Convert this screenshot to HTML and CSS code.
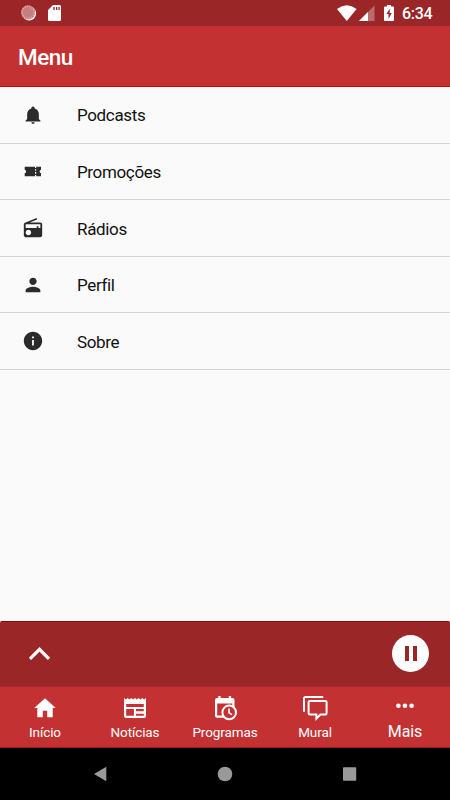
FILE: index.html
```html
<!DOCTYPE html>
<html lang="pt">
<head>
<meta charset="utf-8">
<title>Menu</title>
<link rel="stylesheet" href="styles.css">
</head>
<body>
<div class="app">
  <div class="status">
    <svg class="sync" width="17" height="17" viewBox="0 0 17 17"><circle cx="8.100" cy="8.500" r="7" fill="#fff"/><circle cx="7.100" cy="7.400" r="7.100" fill="#c77e80"/><circle cx="7.100" cy="7.400" r="6" fill="none" stroke="#dba9aa" stroke-width="1.600" stroke-dasharray="1.200 1.200"/></svg>
    <svg class="sd" width="14" height="17" viewBox="0 0 14 17"><path fill="#fff" fill-rule="evenodd" d="M5 0H11.500Q13 0 13 1.500V14.500Q13 16 11.500 16H1.500Q0 16 0 14.500V5ZM5.300 2V5H6.700V2ZM8 2V5H9.300V2ZM10.400 2V5H11.700V2Z"/></svg>
    <span class="spacer"></span>
    <svg class="wifi" width="20" height="17" viewBox="0 0 20 17"><path fill="#fff" d="M0 4Q9.800-3.400 19.600 4L9.800 16Z"/></svg>
    <svg class="signal" width="16" height="16" viewBox="0 0 16 16"><path fill="#b96b6d" d="M0 16L15.500 .5V16Z"/><path fill="#fff" d="M0 16L9 7V16Z"/></svg>
    <svg class="battery" width="11" height="17" viewBox="0 0 11 17"><path fill="#fff" d="M3 0H7V1.500H9Q10 1.500 10 2.500V15Q10 16 9 16H1Q0 16 0 15V2.500Q0 1.500 1 1.500H3Z"/><path fill="#9b2628" d="M5.700 3.600L2.500 9H4.500V14L7.700 8H5.700Z"/></svg>
    <span class="time">6:34</span>
  </div>
  <header class="header"><h1>Menu</h1></header>
  <main class="list">
    <div class="row">
      <svg width="22" height="22" viewBox="-1.200 -1 26.400 26.400"><path d="M21 19V20H3V19L5 17V11C5 7.900 7.030 5.170 10 4.290V4A2 2 0 0 1 14 4V4.290C16.970 5.170 19 7.900 19 11V17L21 19M14 21A2 2 0 0 1 10 21"/></svg>
      <span>Podcasts</span>
    </div>
    <div class="row">
      <svg width="22" height="22" viewBox="0 0 22 22"><path d="M2.700 6.700H13V8H14.200V6.700H19V9.700A1.800 1.800 0 0 0 19 13.200V16.200H14.200V14.900H13V16.200H2.700V13.200A1.800 1.800 0 0 0 2.700 9.700ZM13 9.200V10.800H14.200V9.200ZM13 12.100V13.700H14.200V12.100Z" fill-rule="evenodd"/></svg>
      <span>Promoções</span>
    </div>
    <div class="row">
      <svg width="22" height="22" viewBox="0 0 24 24"><path d="M3.240 6.150C2.510 6.430 2 7.170 2 8v12c0 1.100.89 2 2 2h16c1.110 0 2-.9 2-2V8c0-1.110-.89-2-2-2H8.300l8.260-3.340L15.880 1 3.240 6.150zM7 20c-1.660 0-3-1.340-3-3s1.340-3 3-3 3 1.340 3 3-1.340 3-3 3zm13-8h-2v-2h-2v2H4V8h16v4z"/></svg>
      <span>Rádios</span>
    </div>
    <div class="row">
      <svg width="22" height="22" viewBox="0 0 24 24"><path d="M12 12c2.210 0 4-1.790 4-4s-1.790-4-4-4-4 1.790-4 4 1.790 4 4 4zm0 2c-2.670 0-8 1.340-8 4v2h16v-2c0-2.660-5.330-4-8-4z"/></svg>
      <span>Perfil</span>
    </div>
    <div class="row">
      <svg width="22" height="22" viewBox="0 0 24 24"><path d="M12 2C6.480 2 2 6.480 2 12s4.480 10 10 10 10-4.480 10-10S17.520 2 12 2zm1 15h-2v-6h2v6zm0-8h-2V7h2v2z"/></svg>
      <span>Sobre</span>
    </div>
  </main>
  <div class="player">
    <svg width="23" height="15" viewBox="0 0 23 15"><path d="M2 12.800L11.500 3.300L21 12.800" fill="none" stroke="#fff" stroke-width="3.200"/></svg>
    <div class="pause"><i></i><i></i></div>
  </div>
  <nav class="tabs">
    <div class="tab">
      <svg width="26" height="26" viewBox="0 0 26 26"><path fill="#fff" d="M13 3.200L23.700 13H20.700V22.300H15.200V15.700H10.800V22.300H5.300V13H2.300Z"/></svg>
      <span>Início</span>
    </div>
    <div class="tab">
      <svg width="26" height="26" viewBox="0 0 26 26"><path fill="#fff" fill-rule="evenodd" d="M2 3L3.800 4.600L5.700 3L7.500 4.600L9.300 3L11.200 4.600L13 3L14.800 4.600L16.700 3L18.500 4.600L20.300 3L22.200 4.600L24 3V21Q24 23 22 23H4Q2 23 2 21ZM4.200 9V12H21.800V9ZM4.200 14.100V20.800H11.900V14.100ZM14 14.100V16.200H21.800V14.100ZM14 18.700V20.800H21.800V18.700Z"/></svg>
      <span>Notícias</span>
    </div>
    <div class="tab">
      <svg width="26" height="26" viewBox="0 0 26 26"><path fill="#fff" fill-rule="evenodd" d="M6.300 1H8.600V3H16.800V1H19.100V3H20.500Q22.500 3 22.500 5V11.800A7.700 7.700 0 0 1 14 24L12.500 22.700H5Q3 22.700 3 20.700V5Q3 3 5 3H6.300ZM5.200 8.500V20.500H10.700A7.500 7.500 0 0 1 19.500 10.100H20.300V8.500Z"/><circle cx="17.200" cy="17.400" r="6.800" fill="#c43133" stroke="#fff" stroke-width="2"/><path d="M17 13.500V17.800L20 19.600" fill="none" stroke="#fff" stroke-width="1.600"/></svg>
      <span>Programas</span>
    </div>
    <div class="tab">
      <svg width="26" height="26" viewBox="0 0 26 26"><g fill="none" stroke="#fff" stroke-width="2"><path d="M2 16.800V3.500Q2 2 3.500 2H21.200"/><path d="M7.900 5.900H23.300Q24.600 5.900 24.600 7.200V18.300Q24.600 19.600 23.300 19.600H18.400L14.400 23.600V19.600H7.900Q6.600 19.600 6.600 18.300V7.200Q6.600 5.900 7.900 5.900Z"/></g></svg>
      <span>Mural</span>
    </div>
    <div class="tab more">
      <svg width="26" height="26" viewBox="0 0 26 26"><g fill="#fff"><circle cx="6.400" cy="10.800" r="2.300"/><circle cx="13" cy="10.800" r="2.300"/><circle cx="19.600" cy="10.800" r="2.300"/></g></svg>
      <span>Mais</span>
    </div>
  </nav>
  <div class="system">
    <svg width="15" height="16" viewBox="0 0 15 16"><path fill="#999" d="M1 8L13.300.800V15.200Z"/></svg>
    <svg width="16" height="16" viewBox="0 0 16 16"><circle cx="8" cy="8" r="7.300" fill="#999"/></svg>
    <svg width="15" height="16" viewBox="0 0 15 16"><rect x="1" y="1.300" width="13.200" height="13.500" rx=".7" fill="#999"/></svg>
  </div>
</div>
</body>
</html>
```
FILE: styles.css
```css
* { box-sizing: border-box; }
body { margin: 0; font-family: Roboto, "Liberation Sans", sans-serif; }
svg { display: block; flex: none; }
.app { width: 450px; height: 800px; display: flex; flex-direction: column; background: #fafafa; overflow: hidden; }
.status { height: 26px; flex: none; display: flex; align-items: flex-start; padding: 5px 17px 0 21px; background: #9b2628; }
.sd { margin-left: 10px; }
.spacer { flex: 1; }
.signal { margin-left: 2px; }
.battery { margin-left: 9px; }
.time { margin-left: 7px; color: #fff; font-size: 16px; font-weight: 500; line-height: 18px; letter-spacing: -0.3px; width: 31px; white-space: nowrap; }
.header { height: 61px; flex: none; background: #c43133; border-bottom: 1px solid #c4080a; padding-left: 18px; display: flex; align-items: center; }
.header h1 { margin: 2px 0 0; color: #fff; font-size: 22.500px; font-weight: 500; line-height: 28px; letter-spacing: -0.5px; }
.list { flex: 1; }
.row { height: 56.600px; display: flex; align-items: center; border-bottom: 1px solid #d4d4d4; padding-left: 22px; color: #111; font-size: 17px; letter-spacing: -0.350px; }
.row svg { fill: #2b2b2b; }
.row span { margin: 1.300px 0 0 33px; }
.player { height: 65px; flex: none; background: #9b2628; border-top: 1px solid #880b0e; border-radius: 2px 2px 0 0; display: flex; align-items: center; justify-content: space-between; padding: 0 21px 2px 28px; }
.pause { width: 37px; height: 37px; border-radius: 50%; background: #fff; display: flex; align-items: center; justify-content: center; gap: 4px; }
.pause i { width: 4px; height: 15px; background: #9b2628; }
.tabs { height: 62px; flex: none; background: #c43133; border-top: 1px solid #ae292b; border-bottom: 1px solid #92181a; display: flex; }
.tab { flex: 1; display: flex; flex-direction: column; align-items: center; padding-top: 8px; color: #fff; font-size: 13.500px; line-height: 18px; letter-spacing: -0.1px; }
.tab span { margin-top: 2px; }
.more { font-size: 16px; }
.system { height: 52px; flex: none; background: #000; display: flex; align-items: center; justify-content: space-between; padding: 0 93px 0 93px; }
```
